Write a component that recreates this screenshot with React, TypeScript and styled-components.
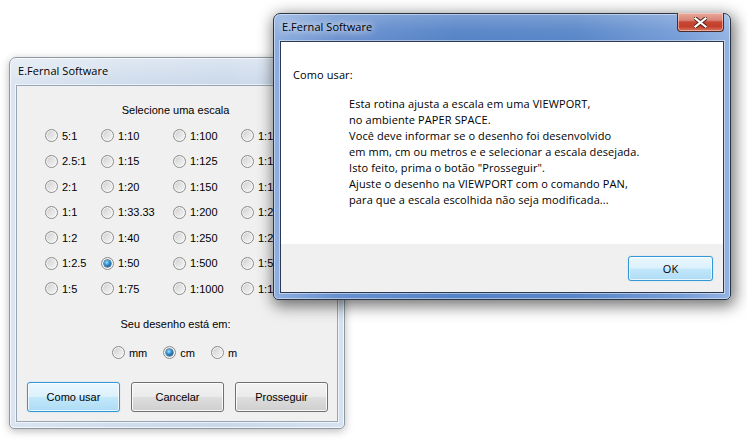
import React from 'react';
import styled, { createGlobalStyle, css } from 'styled-components';

const GlobalStyle = createGlobalStyle`
  html, body { margin: 0; padding: 0; background: #fff; }
  body { width: 747px; height: 443px; overflow: hidden; }
  #root { width: 747px; height: 443px; }
`;

const UI_FONT = `"Liberation Sans", Arial, sans-serif`;
const CAPTION_FONT = `"Open Sans", "Noto Sans", sans-serif`;

const Desktop = styled.div`
  position: relative;
  width: 747px;
  height: 443px;
  background: #fff;
  overflow: hidden;
`;

/* A top-level window: glass frame, caption bar and client area */
const Frame = styled.section<{ $active?: boolean; $x: number; $y: number; $w: number; $h: number }>`
  position: absolute;
  left: ${(p) => p.$x}px;
  top: ${(p) => p.$y}px;
  width: ${(p) => p.$w}px;
  height: ${(p) => p.$h}px;
  box-sizing: border-box;
  display: flex;
  flex-direction: column;
  padding: 0 6px 6px;
  border-radius: 7px 7px 5px 5px;
  ${(p) =>
    p.$active
      ? css`
          border: 1px solid #2a3546;
          background:
            linear-gradient(180deg, rgba(255, 255, 255, 0.22) 0, rgba(255, 255, 255, 0.05) 16px, rgba(255, 255, 255, 0) 27px),
            linear-gradient(90deg, #8eafe0 0%, #6891d0 14%, #5583c7 40%, #5886c8 66%, #789ed8 90%, #94b3e2 100%);
          box-shadow:
            inset 0 0 0 1px rgba(255, 255, 255, 0.45),
            2px 4px 15px 2px rgba(0, 0, 0, 0.55);
          z-index: 2;
        `
      : css`
          border: 1px solid #8e98a3;
          background:
            linear-gradient(180deg, rgba(255, 255, 255, 0.35) 0, rgba(255, 255, 255, 0) 27px),
            linear-gradient(90deg, #dbe5f1 0%, #cfdcec 35%, #cad8ea 65%, #d6e2f0 100%);
          box-shadow:
            inset 0 0 0 1px rgba(255, 255, 255, 0.7),
            0 2px 8px rgba(0, 0, 0, 0.28);
          z-index: 1;
        `}
`;

const TitleBar = styled.header`
  height: 27px;
  display: flex;
  align-items: flex-start;
  flex: none;
`;

const Caption = styled.h1<{ $active?: boolean }>`
  flex: 1;
  margin: 0;
  padding: 6px 0 0 2px;
  font: 400 11px/14px ${CAPTION_FONT};
  letter-spacing: 0.05px;
  color: #000;
  white-space: nowrap;
  text-shadow:
    0 0 6px rgba(255, 255, 255, ${(p) => (p.$active ? 0.95 : 0.8)}),
    0 0 12px rgba(255, 255, 255, ${(p) => (p.$active ? 0.9 : 0.6)}),
    0 0 22px rgba(255, 255, 255, ${(p) => (p.$active ? 0.7 : 0.4)});
`;

const CloseButton = styled.button`
  position: relative;
  flex: none;
  width: 47px;
  height: 19px;
  margin: -1px 0 0;
  padding: 0;
  box-sizing: border-box;
  border: 1px solid #4b2a2a;
  border-top: none;
  border-radius: 0 0 4px 4px;
  background:
    linear-gradient(180deg, #e9a99b 0%, #d98576 40%, #c74634 50%, #c33f2b 75%, #d8765f 100%);
  box-shadow: inset 0 0 0 1px rgba(255, 220, 210, 0.55);
  display: flex;
  align-items: center;
  justify-content: center;
`;

const Client = styled.div<{ $tone: 'dialog' | 'message' }>`
  flex: 1;
  box-sizing: border-box;
  display: flex;
  flex-direction: column;
  min-height: 0;
  overflow: hidden;
  background: #f0f0f0;
  ${(p) =>
    p.$tone === 'message'
      ? css`
          border: 1px solid #2b3a50;
          box-shadow: 0 0 0 1px rgba(255, 255, 255, 0.45);
        `
      : css`
          border: 1px solid #97a5b5;
          box-shadow: 0 0 0 1px rgba(255, 255, 255, 0.6);
        `}
`;

/* ---------- scale dialog ---------- */

const DialogBody = styled.div`
  display: flex;
  flex-direction: column;
  align-items: stretch;
  padding-top: 17px;
  font: 11px/14px ${UI_FONT};
  color: #000;
`;

const SectionLabel = styled.div<{ $gap?: number }>`
  text-align: center;
  padding-right: 3px;
  margin-top: ${(p) => p.$gap ?? 0}px;
  line-height: 14px;
`;

const ScaleGrid = styled.div`
  margin-top: 6px;
  padding-left: 28px;
  display: grid;
  grid-template-columns: 56px 72px 68px 80px;
  grid-auto-rows: 25.5px;
  align-items: center;
`;

const RadioLabel = styled.label`
  display: flex;
  align-items: center;
  gap: 4px;
  white-space: nowrap;
  line-height: 14px;
`;

const RadioMark = styled.span<{ $checked?: boolean }>`
  position: relative;
  flex: none;
  width: 13px;
  height: 13px;
  box-sizing: border-box;
  border-radius: 50%;
  border: 1px solid #8b8c8c;
  background: linear-gradient(135deg, #c9c9c9 0%, #e2e2e2 45%, #f7f7f7 100%);
  box-shadow: inset 0 0 0 1px rgba(255, 255, 255, 0.75);
  ${(p) =>
    p.$checked &&
    css`
      &::after {
        content: '';
        position: absolute;
        left: 2px;
        top: 2px;
        width: 7px;
        height: 7px;
        border-radius: 50%;
        background: radial-gradient(circle at 40% 35%, #a6e2ff 0%, #3c9ede 35%, #14578f 75%, #0d3a63 100%);
        box-shadow: 0 0 0 0.5px #1b4d78;
      }
    `}
`;

const UnitRow = styled.div`
  margin-top: 15px;
  display: flex;
  justify-content: center;
  gap: 16px;
  padding-right: 5px;
`;

const ButtonRow = styled.div`
  margin-top: 22px;
  display: flex;
  gap: 11px;
  padding-left: 10px;
`;

const PushButton = styled.button<{ $primary?: boolean; $w: number; $h: number }>`
  box-sizing: border-box;
  width: ${(p) => p.$w}px;
  height: ${(p) => p.$h}px;
  padding: 0;
  border: 1px solid #707070;
  border-radius: 3px;
  background: linear-gradient(180deg, #f2f2f2 0%, #ebebeb 48%, #dddddd 52%, #cfcfcf 100%);
  box-shadow: inset 0 0 0 1px rgba(255, 255, 255, 0.85);
  font: 11px/14px ${UI_FONT};
  color: #000;
  ${(p) =>
    p.$primary &&
    css`
      border-color: #3399d6;
      background: linear-gradient(180deg, #ebf7fd 0%, #dcf1fc 48%, #c2e7fa 52%, #aedcf5 100%);
      box-shadow: inset 0 0 0 1px rgba(255, 255, 255, 0.7), 0 0 1px 0 rgba(60, 148, 207, 0.6);
    `}
`;

/* ---------- help message box ---------- */

const MessageArea = styled.div`
  flex: 1;
  background: #fff;
  padding: 25px 0 0 12px;
  font: 11px/16px ${CAPTION_FONT};
  letter-spacing: 0.1px;
  color: #000;
`;

const MessageTitle = styled.p`
  margin: 0;
`;

const MessageText = styled.p`
  margin: 13px 0 0 56px;
  white-space: pre-line;
`;

const MessageFooter = styled.div`
  flex: none;
  height: 48px;
  background: #f0f0f0;
  display: flex;
  justify-content: flex-end;
  align-items: flex-start;
  padding: 12px 10px 0 0;
  box-sizing: border-box;
`;

const OkButton = styled(PushButton)`
  font: 11px/14px ${CAPTION_FONT};
`;

const scaleRows: string[][] = [
  ['5:1', '1:10', '1:100', '1:1250'],
  ['2.5:1', '1:15', '1:125', '1:1500'],
  ['2:1', '1:20', '1:150', '1:1750'],
  ['1:1', '1:33.33', '1:200', '1:2000'],
  ['1:2', '1:40', '1:250', '1:2500'],
  ['1:2.5', '1:50', '1:500', '1:5000'],
  ['1:5', '1:75', '1:1000', '1:10000'],
];

const units = ['mm', 'cm', 'm'];

const helpLines = [
  'Esta rotina ajusta a escala em uma VIEWPORT,',
  'no ambiente PAPER SPACE.',
  'Você deve informar se o desenho foi desenvolvido',
  'em mm, cm ou metros e e selecionar a escala desejada.',
  'Isto feito, prima o botão "Prosseguir".',
  'Ajuste o desenho na VIEWPORT com o comando PAN,',
  'para que a escala escolhida não seja modificada...',
].join('\n');

function Radio({ label, checked }: { label: string; checked?: boolean }) {
  return (
    <RadioLabel>
      <RadioMark $checked={checked} />
      <span>{label}</span>
    </RadioLabel>
  );
}

function CloseGlyph() {
  return (
    <svg width="13" height="11" viewBox="0 0 13 11">
      <path
        d="M1.5 1.5 L11.5 9.5 M11.5 1.5 L1.5 9.5"
        stroke="#4a1d16"
        strokeWidth="4"
        strokeLinecap="square"
        fill="none"
      />
      <path
        d="M1.5 1.5 L11.5 9.5 M11.5 1.5 L1.5 9.5"
        stroke="#ffffff"
        strokeWidth="2.2"
        strokeLinecap="square"
        fill="none"
      />
    </svg>
  );
}

export default function App() {
  return (
    <>
      <GlobalStyle />
      <Desktop>
        <Frame $x={9} $y={57} $w={336} $h={372}>
          <TitleBar>
            <Caption>E.Fernal Software</Caption>
          </TitleBar>
          <Client $tone="dialog">
            <DialogBody>
              <SectionLabel>Selecione uma escala</SectionLabel>
              <ScaleGrid>
                {scaleRows.flat().map((s) => (
                  <Radio key={s} label={s} checked={s === '1:50'} />
                ))}
              </ScaleGrid>
              <SectionLabel $gap={15}>Seu desenho está em:</SectionLabel>
              <UnitRow>
                {units.map((u) => (
                  <Radio key={u} label={u} checked={u === 'cm'} />
                ))}
              </UnitRow>
              <ButtonRow>
                <PushButton $primary $w={93} $h={30}>Como usar</PushButton>
                <PushButton $w={93} $h={30}>Cancelar</PushButton>
                <PushButton $w={93} $h={30}>Prosseguir</PushButton>
              </ButtonRow>
            </DialogBody>
          </Client>
        </Frame>

        <Frame $active $x={273} $y={13} $w={458} $h={287}>
          <TitleBar>
            <Caption $active>E.Fernal Software</Caption>
            <CloseButton aria-label="Fechar">
              <CloseGlyph />
            </CloseButton>
          </TitleBar>
          <Client $tone="message">
            <MessageArea>
              <MessageTitle>Como usar:</MessageTitle>
              <MessageText>{helpLines}</MessageText>
            </MessageArea>
            <MessageFooter>
              <OkButton $primary $w={85} $h={25}>OK</OkButton>
            </MessageFooter>
          </Client>
        </Frame>
      </Desktop>
    </>
  );
}
